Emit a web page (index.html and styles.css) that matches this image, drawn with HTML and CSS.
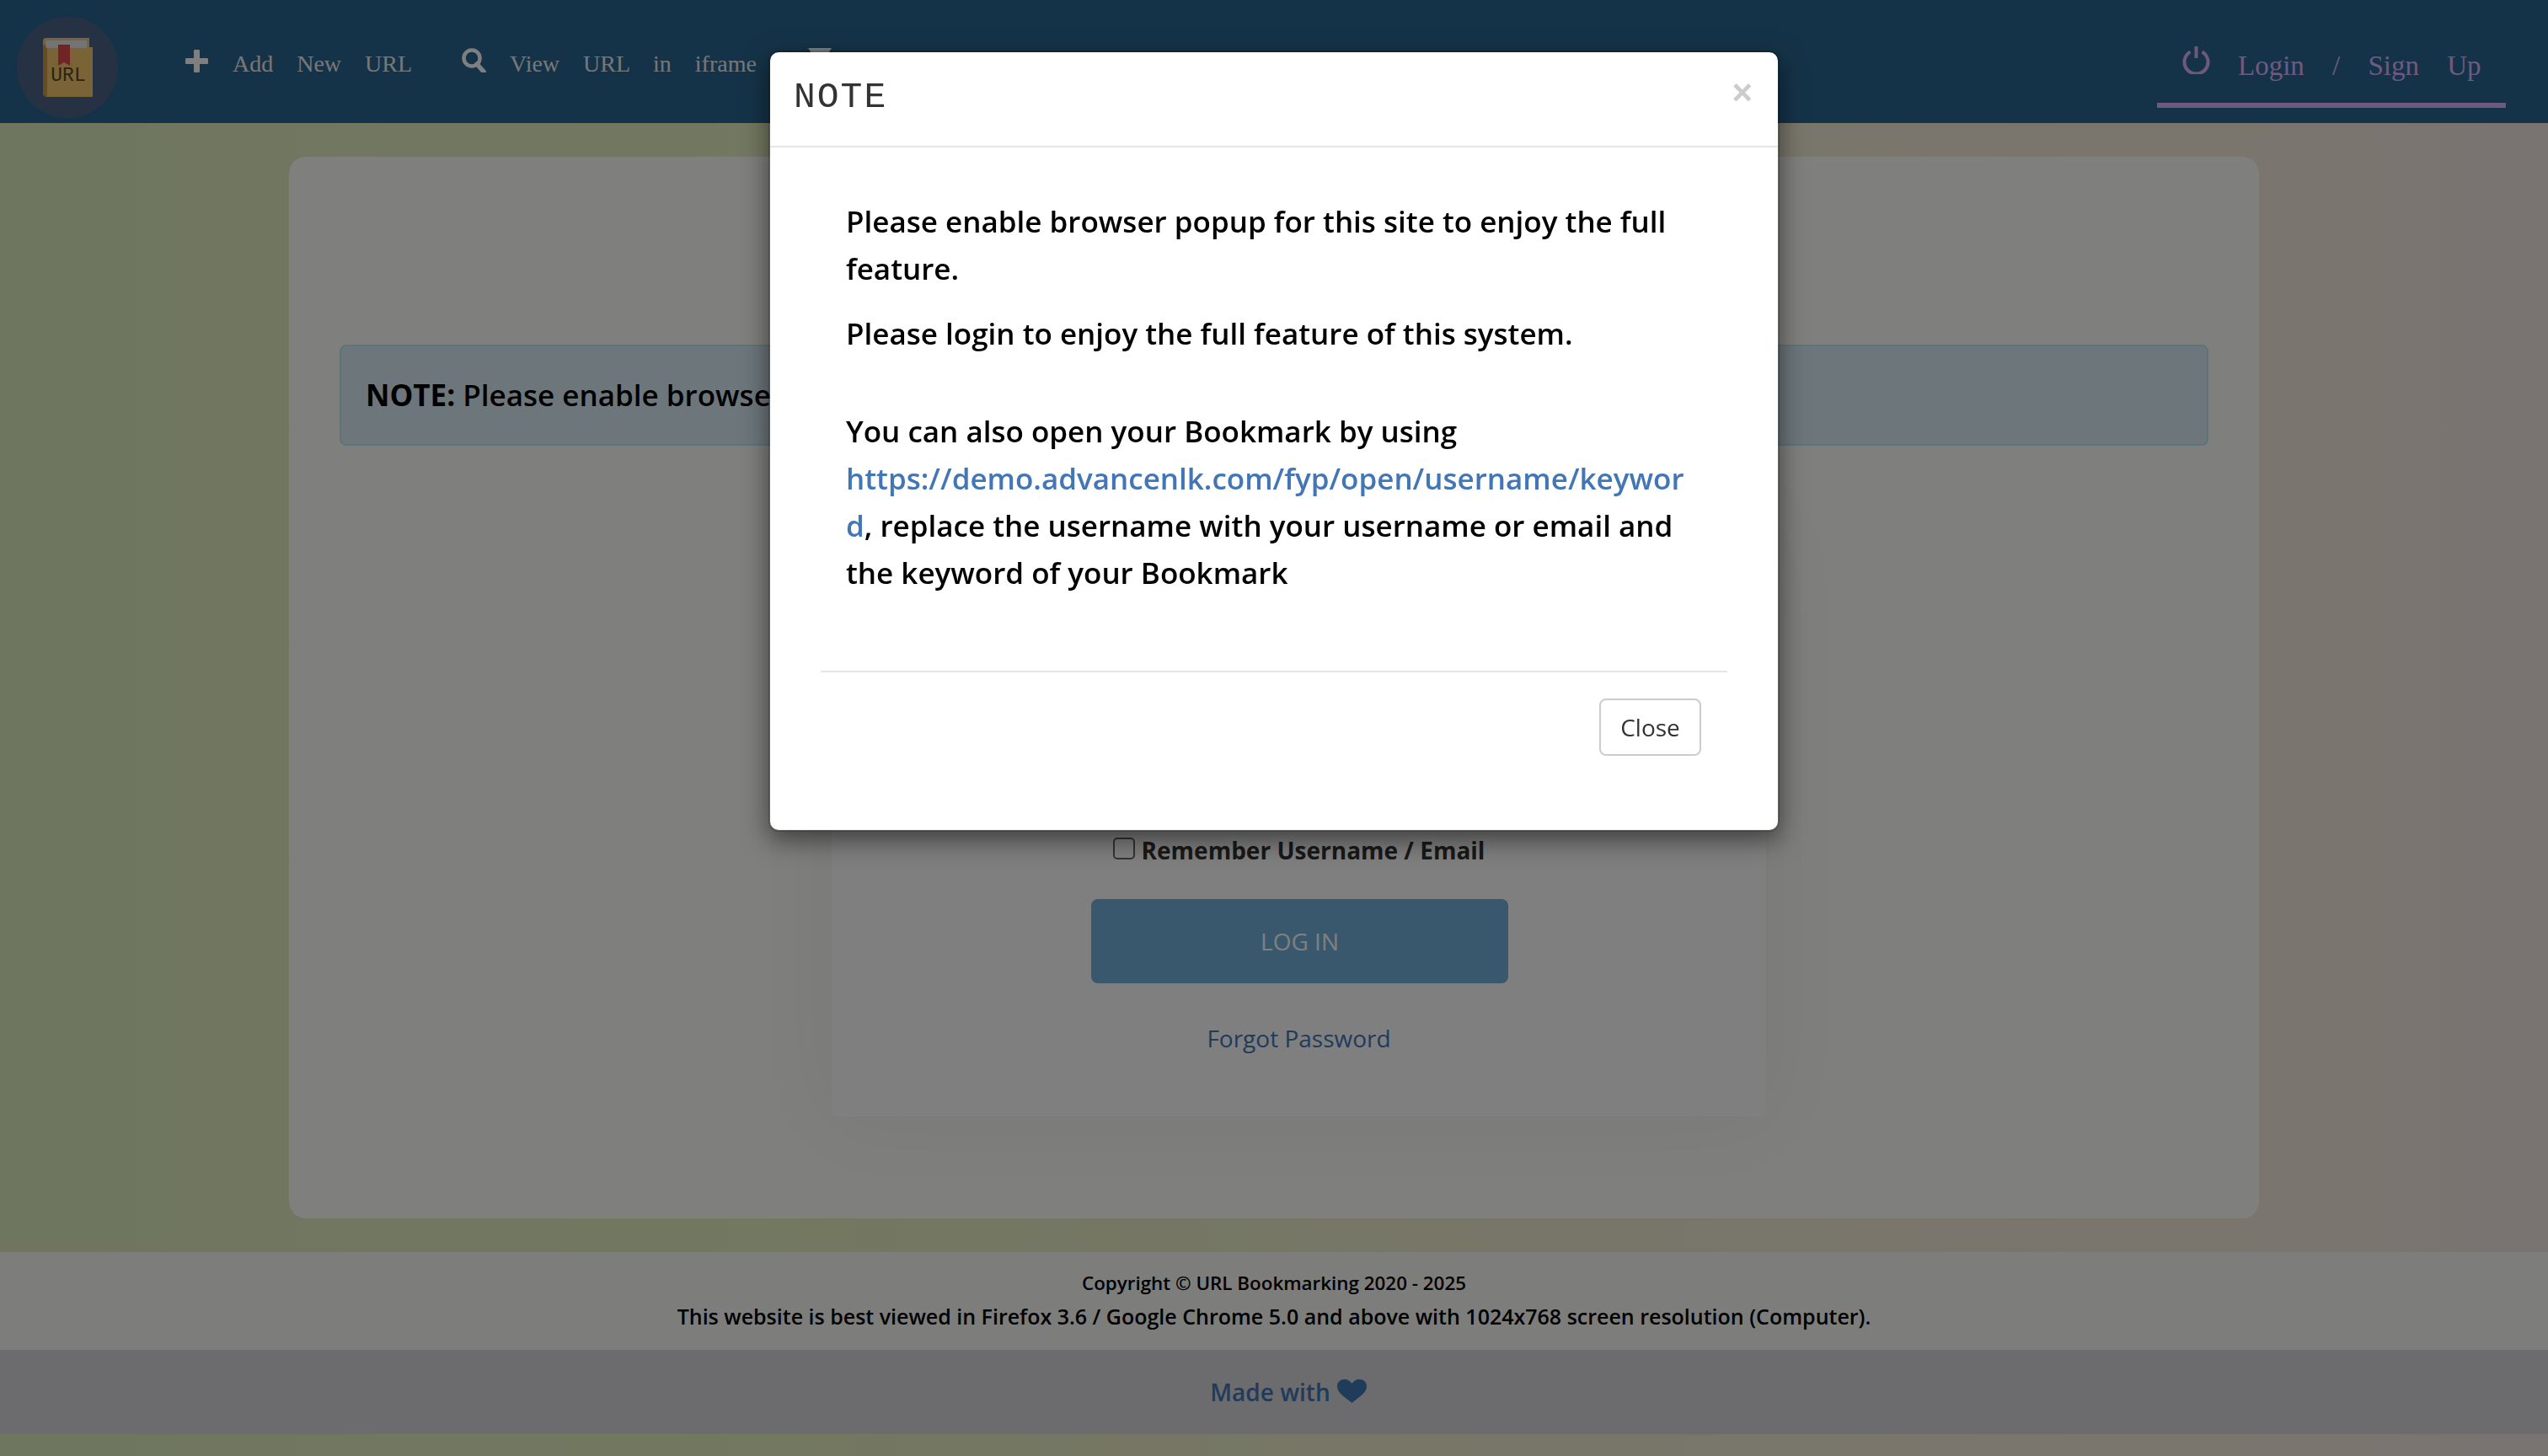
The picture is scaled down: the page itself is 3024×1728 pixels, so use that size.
FILE: index.html
```html
<!DOCTYPE html>
<html lang="en">
<head>
  <meta charset="utf-8">
  <title>URL Bookmarking</title>
  <link rel="stylesheet" href="styles.css">
</head>
<body>
  <!-- top navigation -->
  <nav class="navbar">
    <div class="brand">
      <svg class="brand-logo" viewBox="0 0 60 72" width="60" height="72">
        <path d="M4 1 H56 V12 H59 Q60 12 60 13 V70 Q60 71 59 71 H7 Q1 71 1 65 V5 Q1 1 4 1 Z" fill="#f2c66f"/>
        <path d="M1 12 Q1 8 6 8 V71 Q1 71 1 65 Z" fill="#c99a4a"/>
        <path d="M6 4 H53 V13 H6 Q4 13 4 8 Q4 4 6 4 Z" fill="#e8e8e8"/>
        <path d="M19 9 H33 V34 L26 30 L19 34 Z" fill="#e0494a"/>
        <text x="31" y="52" class="brand-text">URL</text>
      </svg>
    </div>
    <ul class="nav-links">
      <li class="nav-item">
        <svg class="nav-icon nav-plus" viewBox="0 0 27 27" width="27" height="27"><path d="M10 1 Q10 0 11 0 H16 Q17 0 17 1 V10 H26 Q27 10 27 11 V16 Q27 17 26 17 H17 V26 Q17 27 16 27 H11 Q10 27 10 26 V17 H1 Q0 17 0 16 V11 Q0 10 1 10 H10 Z"/></svg>
        <a href="#">Add New URL</a>
      </li>
      <li class="nav-item">
        <svg class="nav-icon nav-search" viewBox="0 0 30 29" width="30" height="29"><circle cx="12" cy="12" r="9.5" fill="none" stroke-width="4.5"/><path d="M18 19 L26 28" stroke-width="5.5" stroke-linecap="round"/></svg>
        <a href="#">View URL in iframe</a>
      </li>
      <li class="nav-item nav-last">
        <svg class="nav-icon" viewBox="0 0 28 27" width="28" height="27"><path d="M0 0 H28 L24 6 H4 Z"/></svg>
      </li>
    </ul>
    <a class="nav-login" href="#">
      <svg class="power-icon" viewBox="0 0 33 33" width="33" height="33"><path d="M9.500 6.500 A14 14 0 1 0 23.500 6.500" fill="none" stroke="#dcb3f0" stroke-width="4"/><path d="M16.500 0 V14" stroke="#dcb3f0" stroke-width="4"/></svg>
      <span>Login / Sign Up</span>
    </a>
  </nav>

  <main class="content">
    <div class="card">
      <div class="alert"><strong>NOTE:</strong> Please enable browser popup for this site to enjoy the full feature.</div>
      <div class="login-box">
        <label class="remember"><input type="checkbox"> Remember Username / Email</label>
        <button class="login-btn" type="button">LOG IN</button>
        <a class="forgot" href="#">Forgot Password</a>
      </div>
    </div>
  </main>

  <footer>
    <div class="copyright">
      <p class="copy-line">Copyright © URL Bookmarking 2020 - 2025</p>
      <p class="copy-note">This website is best viewed in Firefox 3.6 / Google Chrome 5.0 and above with 1024x768 screen resolution (Computer).</p>
    </div>
    <div class="made-with">
      Made with
      <svg class="heart" viewBox="0 0 35 28" width="35" height="28"><path d="M17.500 28 C12 23 0 17 0 8.500 C0 3 4 0 8.500 0 C12.500 0 15.500 2 17.500 5 C19.500 2 22.500 0 26.500 0 C31 0 35 3 35 8.500 C35 17 23 23 17.500 28 Z"/></svg>
    </div>
  </footer>

  <div class="backdrop"></div>

  <!-- popup shown on load -->
  <div class="modal">
    <div class="modal-header">
      <h4>NOTE</h4>
      <span class="close">×</span>
    </div>
    <div class="modal-body">
      <p class="first">Please enable browser popup for this site to enjoy the full feature.</p>
      <p class="second">Please login to enjoy the full feature of this system.</p>
      <p class="third">You can also open your Bookmark by using <a href="#">https://demo.advancenlk.com/fyp/open/username/keyword</a>, replace the username with your username or email and the keyword of your Bookmark</p>
    </div>
    <div class="modal-footer">
      <button type="button">Close</button>
    </div>
  </div>
</body>
</html>
```
FILE: styles.css
```css
* {
  box-sizing: border-box;
}

body {
  margin: 0;
  min-height: 1728px;
  font-family: "Open Sans", sans-serif;
  background: linear-gradient(to right, #deecc0, #e6f0c0 30%, #f2ecd6 69%, #f5ebdc 89%, #f2e8e4);
}

.navbar {
  display: flex;
  align-items: flex-start;
  height: 146px;
  background-color: #2a6690;
}

.brand {
  display: flex;
  align-items: center;
  justify-content: center;
  width: 120px;
  height: 120px;
  margin: 20px 0 0 20px;
  border-radius: 50%;
  background-color: #4c6488;
}

.brand-text {
  font-family: "Liberation Mono", monospace;
  font-size: 23px;
  text-anchor: middle;
  fill: #5e4520;
}

.nav-links {
  display: flex;
  gap: 59px;
  margin: 57px 0 0 80px;
  padding: 0;
  list-style: none;
}

.nav-item {
  display: flex;
  align-items: flex-start;
  gap: 29px;
}

.nav-item a {
  margin-top: 3px;
  font-family: "Liberation Serif", serif;
  font-size: 28px;
  line-height: 32px;
  word-spacing: 21px;
  color: #eee;
  text-decoration: none;
}

.nav-icon {
  flex-shrink: 0;
  fill: #fff;
}

.nav-plus {
  margin-top: 2px;
}

.nav-search {
  margin-right: -2px;
  stroke: #fff;
}

.nav-last {
  margin-left: 2px;
}

.nav-login {
  display: flex;
  align-items: flex-start;
  gap: 33px;
  width: 414px;
  height: 73px;
  margin: 55px 50px 0 auto;
  padding-left: 30px;
  border-bottom: 6px solid #deb4ff;
  font-family: "Liberation Serif", serif;
  font-size: 33px;
  line-height: 38px;
  word-spacing: 25px;
  color: #deb4ff;
  text-decoration: none;
}

.power-icon {
  flex-shrink: 0;
}

.nav-login span {
  margin-top: 4px;
  white-space: nowrap;
}

.content {
  height: 1340px;
  padding-top: 40px;
}

.card {
  width: 2338px;
  height: 1260px;
  margin-left: 343px;
  padding: 223px 60px 0;
  border-radius: 20px;
  background-color: #fefefa;
}

.alert {
  height: 120px;
  padding: 0 29px;
  border: 2px solid #bce8f1;
  border-radius: 8px;
  background-color: #d9edf7;
  font-size: 35px;
  font-weight: 600;
  line-height: 116px;
  color: #000;
}

.alert strong {
  font-weight: 700;
}

.login-box {
  display: flex;
  flex-direction: column;
  align-items: center;
  width: 1109px;
  height: 708px;
  margin: 88px 0 0 584px;
  padding-top: 372px;
  border-radius: 8px;
  background-color: #fff;
  box-shadow: 0 0 100px rgba(0, 0, 0, 0.06);
}

.remember {
  display: flex;
  align-items: center;
  gap: 8px;
  font-size: 28px;
  font-weight: 700;
  line-height: 40px;
  color: #333;
}

.remember input {
  appearance: none;
  width: 26px;
  height: 26px;
  margin: -4px 0 0;
  border: 2px solid #666;
  border-radius: 5px;
}

.login-btn {
  width: 495px;
  height: 100px;
  margin: 38px 0 0 2px;
  border: none;
  border-radius: 8px;
  background-color: #72b0dc;
  font-family: "Open Sans", sans-serif;
  font-size: 28px;
  color: #fff;
}

.forgot {
  margin-top: 45px;
  font-size: 28px;
  line-height: 40px;
  color: #4276b4;
  text-decoration: none;
}

.copyright {
  height: 116px;
  padding-top: 19px;
  background-color: #fbfbf7;
  text-align: center;
  color: #000;
  font-weight: 600;
}

.copyright p {
  margin: 0;
}

.copy-line {
  font-size: 22.400px;
  line-height: 36px;
}

.copy-note {
  font-size: 25px;
  line-height: 42px;
}

.made-with {
  display: flex;
  align-items: center;
  justify-content: center;
  gap: 8px;
  height: 100px;
  padding-left: 34px;
  background-color: #d8d8dc;
  font-size: 28px;
  font-weight: 600;
  color: #4276b4;
}

.heart {
  margin-top: -3px;
  fill: #4276b4;
}

.backdrop {
  position: fixed;
  top: 0;
  left: 0;
  right: 0;
  bottom: 0;
  background-color: rgba(0, 0, 0, 0.5);
}

.modal {
  position: absolute;
  top: 60px;
  left: 912px;
  width: 1200px;
  height: 927px;
  border: 2px solid rgba(0, 0, 0, 0.2);
  border-radius: 12px;
  background-color: #fff;
  background-clip: padding-box;
  box-shadow: 0 10px 30px rgba(0, 0, 0, 0.5);
}

.modal-header {
  display: flex;
  justify-content: space-between;
  height: 113px;
  padding: 0 30px 0 28px;
  border-bottom: 2px solid #e5e5e5;
}

.modal-header h4 {
  margin: 29px 0 0;
  font-family: "Liberation Mono", monospace;
  font-size: 43px;
  font-weight: 400;
  line-height: 50px;
  letter-spacing: 2px;
  color: #333;
}

.close {
  margin: 24px 0 0;
  font-family: "Liberation Sans", sans-serif;
  font-size: 42px;
  font-weight: 700;
  line-height: 48px;
  color: #ccc;
}

.modal-body {
  width: 1076px;
  height: 623px;
  margin-left: 60px;
  padding: 60px 42px 0 30px;
  border-bottom: 2px solid #e5e5e5;
  font-size: 35px;
  font-weight: 600;
  line-height: 56px;
  color: #000;
}

.modal-body p {
  margin: 0;
  overflow-wrap: break-word;
}

.modal-body .first {
  margin-bottom: 21px;
}

.modal-body .second {
  margin-bottom: 60px;
}

.modal-body a {
  color: #4276b4;
  text-decoration: none;
}

.modal-footer {
  display: flex;
  justify-content: flex-end;
  padding: 31px 91px 0 0;
}

.modal-footer button {
  width: 121px;
  height: 68px;
  border: 2px solid #ccc;
  border-radius: 8px;
  background-color: #fff;
  font-family: "Open Sans", sans-serif;
  font-size: 28px;
  color: #333;
}
```
